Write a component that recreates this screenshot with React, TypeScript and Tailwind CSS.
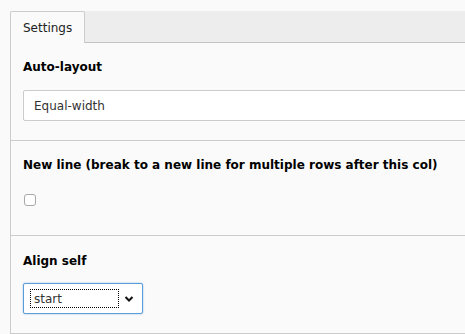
import React from "react";

export default function App() {
  return (
    <div
      className="w-[465px] h-[334px] overflow-hidden bg-[#fafafa] pt-[11px] pl-[10px] text-[12px] text-black"
      style={{ fontFamily: '"DejaVu Sans", Verdana, sans-serif' }}
    >
      <div className="w-[600px]">
        <div className="flex h-[32px] bg-[#ededed] border-b border-[#c3c3c3]">
          <div className="h-[32px] bg-[#fafafa] border border-b-0 border-[#cccccc] rounded-t-[2px] px-[12px] flex items-center leading-[18px] text-[#222]">
            Settings
          </div>
        </div>
        <div className="border-l border-[#cccccc]">
          <div className="border-b border-[#cccccc] pt-[15px] pb-[19px] pl-[12px]">
            <div className="font-bold leading-[18px]">Auto-layout</div>
            <div className="mt-[14px] h-[31px] w-[560px] bg-white border border-[#cccccc] rounded-[2px] flex items-center pl-[10px] text-[#333] leading-[18px]">
              Equal-width
            </div>
          </div>
          <div className="border-b border-[#cccccc] pt-[15px] h-[95px] pl-[12px]">
            <div className="font-bold leading-[18px]">
              New line (break to a new line for multiple rows after this col)
            </div>
            <div className="mt-[20px] ml-[1px] w-[12px] h-[12px] border border-[#a8a8a8] rounded-[3px] bg-white" />
          </div>
          <div className="border-b border-[#cccccc] pt-[16px] h-[98px] pl-[12px]">
            <div className="font-bold leading-[18px]">Align self</div>
            <div className="mt-[13px] h-[31px] w-[120px] bg-white border border-[#5b9dd9] rounded-[2px] shadow-[0_0_2px_rgba(91,157,217,0.6)] flex items-center pl-[6px] pr-[8px]">
              <span className="h-[19px] w-[89px] border border-dotted border-black flex items-center pl-[3px] text-[#333] leading-[18px]">
                start
              </span>
              <svg className="ml-auto" width="10" height="8" viewBox="0 0 10 8">
                <path d="M1.5 2 L5 5.5 L8.5 2" fill="none" stroke="#111" strokeWidth="2" />
              </svg>
            </div>
          </div>
        </div>
      </div>
    </div>
  );
}
